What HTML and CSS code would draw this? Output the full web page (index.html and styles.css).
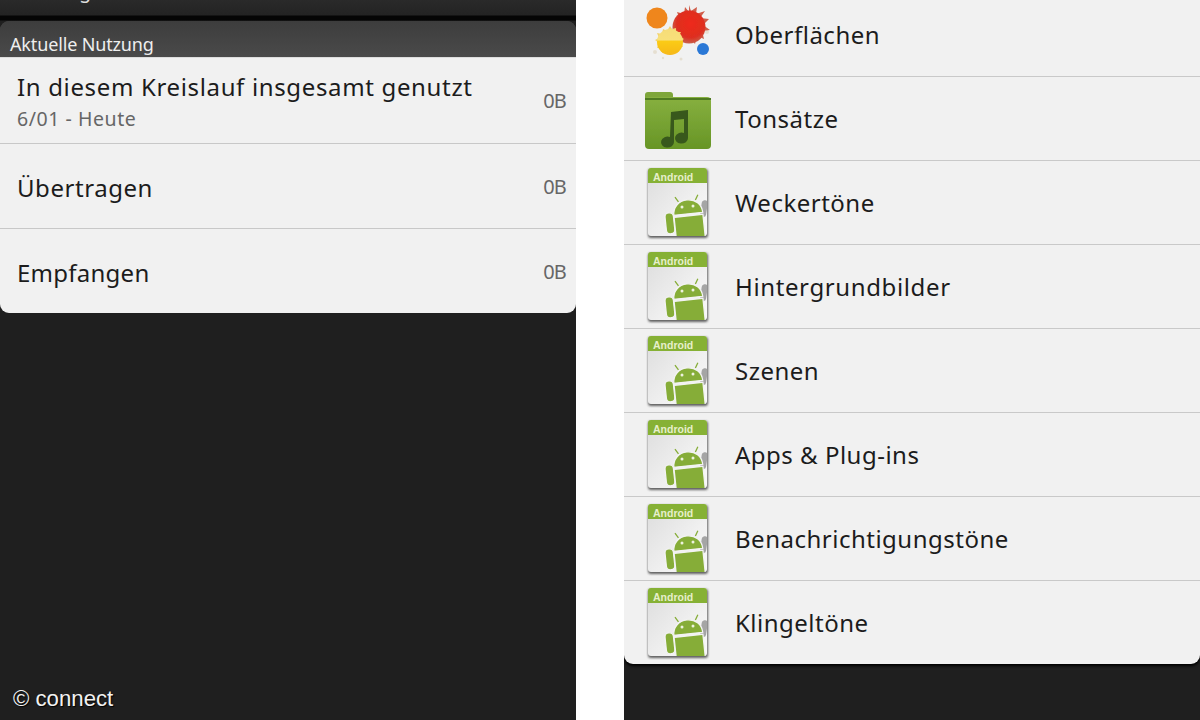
FILE: index.html
```html
<!DOCTYPE html>
<html lang="de">
<head>
<meta charset="utf-8">
<title>Screens</title>
<link rel="stylesheet" href="styles.css">
</head>
<body>
<svg class="defs" width="0" height="0">
  <defs>
    <filter id="soft" x="-10%" y="-10%" width="120%" height="120%"><feGaussianBlur stdDeviation=".45"/></filter>
    <filter id="shade" x="-20%" y="-20%" width="140%" height="140%"><feGaussianBlur stdDeviation="1.300"/></filter>
    <clipPath id="pageClip"><rect x="7" y="2" width="59" height="68" rx="3"/></clipPath>
    <linearGradient id="pageGrad" x1="0" y1="0" x2="1" y2="1"><stop offset="0" stop-color="#dcdcdc"/><stop offset=".6" stop-color="#f0f0f0"/><stop offset="1" stop-color="#fafafa"/></linearGradient>
    <linearGradient id="folderGrad" x1="0" y1="0" x2="0" y2="1"><stop offset="0" stop-color="#87b040"/><stop offset="1" stop-color="#679526"/></linearGradient>
    <radialGradient id="redGrad" cx=".55" cy=".4" r=".6"><stop offset="0" stop-color="#ee2a1c"/><stop offset=".7" stop-color="#de2f20"/><stop offset="1" stop-color="#c9604a"/></radialGradient>
    <linearGradient id="yellowGrad" x1="0" y1="0" x2="0" y2="1"><stop offset="0" stop-color="#f6dc78"/><stop offset=".42" stop-color="#f8e07a"/><stop offset=".47" stop-color="#fbcb17"/><stop offset="1" stop-color="#f6b81a"/></linearGradient>
    <symbol id="apk" viewBox="0 0 70 74">
      <rect x="7" y="3" width="60" height="69" rx="3" fill="#3c3c3c" opacity=".8" filter="url(#shade)"/>
      <g filter="url(#soft)">
        <rect x="7" y="2" width="59" height="68" rx="3" fill="url(#pageGrad)"/>
        <path d="M7 17V5a3 3 0 0 1 3-3h53a3 3 0 0 1 3 3v12z" fill="#86b135"/>
        <g clip-path="url(#pageClip)">
          <rect x="60" y="34" width="6" height="17" rx="3" fill="#a5a5a5" transform="rotate(8 62 42)"/>
          <g transform="rotate(-6 46 50)" stroke="#f3f3f3" stroke-width="1.300" fill="#86ad38">
            <rect x="24" y="45" width="8.500" height="21" rx="4"/>
            <path d="M33 50h29v28H33z"/>
            <path d="M33 48c0-8 6-14 14.500-14S62 40 62 48z"/>
            <path d="M39 35l-3-5M56 35l3-5" fill="none" stroke="#86ad38"/>
          </g>
          <circle cx="41" cy="41" r="1.500" fill="#eef2df"/>
          <circle cx="52" cy="40" r="1.500" fill="#eef2df"/>
        </g>
      </g>
      <text x="12" y="15" class="apk-label">Android</text>
    </symbol>
  </defs>
</svg>
<main class="page">
  <section class="panel panel-left">
    <div class="status"><span class="status-text">Nutzung</span></div>
    <div class="card">
      <h2 class="card-head">Aktuelle Nutzung</h2>
      <div class="usage">
        <div class="usage-row">
          <div class="usage-copy">
            <div class="title">In diesem Kreislauf insgesamt genutzt</div>
            <div class="sub">6/01 - Heute</div>
          </div>
          <span class="value">0B</span>
        </div>
        <div class="usage-row usage-row-b">
          <div class="title">Übertragen</div>
          <span class="value">0B</span>
        </div>
        <div class="usage-row usage-row-b">
          <div class="title title-tight">Empfangen</div>
          <span class="value">0B</span>
        </div>
      </div>
    </div>
    <div class="credit">© connect</div>
  </section>
  <section class="panel panel-right">
    <ul class="menu">
      <li class="menu-row menu-first">
        <svg class="icon" viewBox="0 0 70 72">
          <g filter="url(#soft)">
            <g fill="#e4ddcf" opacity=".9"><circle cx="14" cy="50" r="2"/><circle cx="66" cy="30" r="2"/><circle cx="40" cy="57" r="1.500"/><circle cx="22" cy="56" r="1.200"/></g>
            <circle cx="16" cy="16" r="10.500" fill="#ef861c"/>
            <path d="M48 3l2 6 6-4-1 7 9-3-5 7 9 1-6 6 7 5-8 1 2 8-7-3-2 8-5-6-6 4 0-8-8 0 4-7-7-4 7-3-3-8 7 2 1-7 4 5z" fill="#cf5c48"/>
            <circle cx="48" cy="25" r="16.500" fill="url(#redGrad)"/>
            <path d="M29 24l2 3 4-1 0 4 5 0-2 4 5 3-4 3 3 5-5 0 0 5-5-2-3 5-3-4-5 2 0-5-5 0 2-5-4-3 4-2-2-5 5 1 1-5 4 2z" fill="#f2d36e"/>
            <circle cx="29" cy="40" r="13" fill="url(#yellowGrad)"/>
            <circle cx="62" cy="47" r="6" fill="#2c78d6"/>
          </g>
        </svg>
        <span class="label">Oberflächen</span>
      </li>
      <li class="menu-row">
        <svg class="icon" viewBox="0 0 70 72">
          <g filter="url(#soft)">
            <path d="M4 12a3 3 0 0 1 3-3h22a3 3 0 0 1 3 3v5H4z" fill="#7ea63a"/>
            <rect x="4" y="14" width="66" height="52" rx="4" fill="url(#folderGrad)"/>
            <rect x="4" y="15" width="66" height="2" fill="#4f7a20"/>
            <path d="M30 29l17-2v28a6.500 5.500 0 1 1-4-5V36l-10 1v22a6.500 5.500 0 1 1-4-5z" fill="#37581a"/>
          </g>
        </svg>
        <span class="label">Tonsätze</span>
      </li>
      <li class="menu-row"><svg class="icon"><use href="#apk"/></svg><span class="label">Weckertöne</span></li>
      <li class="menu-row"><svg class="icon"><use href="#apk"/></svg><span class="label label-wide">Hintergrundbilder</span></li>
      <li class="menu-row"><svg class="icon"><use href="#apk"/></svg><span class="label">Szenen</span></li>
      <li class="menu-row"><svg class="icon"><use href="#apk"/></svg><span class="label">Apps &amp; Plug-ins</span></li>
      <li class="menu-row"><svg class="icon"><use href="#apk"/></svg><span class="label">Benachrichtigungstöne</span></li>
      <li class="menu-row menu-last"><svg class="icon"><use href="#apk"/></svg><span class="label">Klingeltöne</span></li>
    </ul>
  </section>
</main>
</body>
</html>
```
FILE: styles.css
```css
* { box-sizing: border-box; }
html, body { margin: 0; height: 720px; overflow: hidden; background: #fff; }
body { font-family: "Noto Sans", "Open Sans", sans-serif; }
.defs { display: block; height: 0; }
.page { display: flex; gap: 48px; height: 720px; }
.panel { position: relative; width: 576px; height: 720px; background: #1f1f1f; overflow: hidden; }

.status {
  height: 21px;
  padding-left: 10px;
  overflow: hidden;
  background: linear-gradient(#2a2a2a 0, #232323 15px, #050505 16px, #050505 20px, #1e1e1e 21px);
}
.status-text { display: block; margin-top: -24px; font-size: 20px; line-height: 30px; color: #ddd; }

.card { background: #444; border-radius: 9px; overflow: hidden; height: 292px; }
.card-head {
  height: 36px;
  margin: 0;
  padding: 12px 0 0 10px;
  font-size: 18px;
  font-weight: 400;
  line-height: 22px;
  letter-spacing: -.15px;
  color: #eee;
  background: linear-gradient(#3d3d3d, #4a4a4a);
  overflow: hidden;
}
.usage { height: 256px; background: #f1f1f1; border-top: 1px solid #ddd; }
.usage-row { display: flex; align-items: center; justify-content: space-between; height: 85px; padding: 0 10px 0 17px; }
.usage-row-b { border-top: 1px solid #c8c8c8; }
.usage-row-b .title { margin-top: 4px; }
.usage-copy { margin-top: 2px; }
.title { font-size: 24px; line-height: 30px; letter-spacing: .55px; color: #1c1c1c; white-space: nowrap; }
.usage-copy .title { letter-spacing: .65px; }
.title-tight { letter-spacing: .25px; }
.sub { margin-top: 4px; font-size: 19.500px; line-height: 26px; letter-spacing: .55px; color: #666; }
.value { font-size: 20px; color: #666; letter-spacing: -.8px; }

.credit {
  position: absolute;
  left: 13px;
  top: 686px;
  font-family: "Liberation Sans", Arial, sans-serif;
  font-size: 22.200px;
  line-height: 26px;
  color: #f2f2f2;
  text-shadow: 1px 1px 1px #000;
}

.menu { list-style: none; margin: 0; padding: 0; height: 664px; background: #f1f1f1; border-radius: 0 0 9px 9px; overflow: hidden; box-shadow: 0 2px 3px #000; }
.menu-row { display: flex; align-items: center; height: 84px; padding-left: 19px; gap: 39px; border-bottom: 1px solid #c9c9c9; }
.menu-first { height: 77px; }
.menu-last { border-bottom: 0; height: 83px; }
.icon { width: 70px; height: 74px; flex: none; margin-left: -2px; }
.menu-first .icon { height: 72px; }
.label { font-size: 24px; line-height: 30px; letter-spacing: .5px; color: #1c1c1c; white-space: nowrap; margin-left: -15px; }
.label-wide { letter-spacing: .62px; }
.menu-first .label { margin-top: -7px; }
.apk-label { font-family: "Liberation Sans", Arial, sans-serif; font-size: 10.500px; font-weight: 700; fill: #e6efcb; }
```
